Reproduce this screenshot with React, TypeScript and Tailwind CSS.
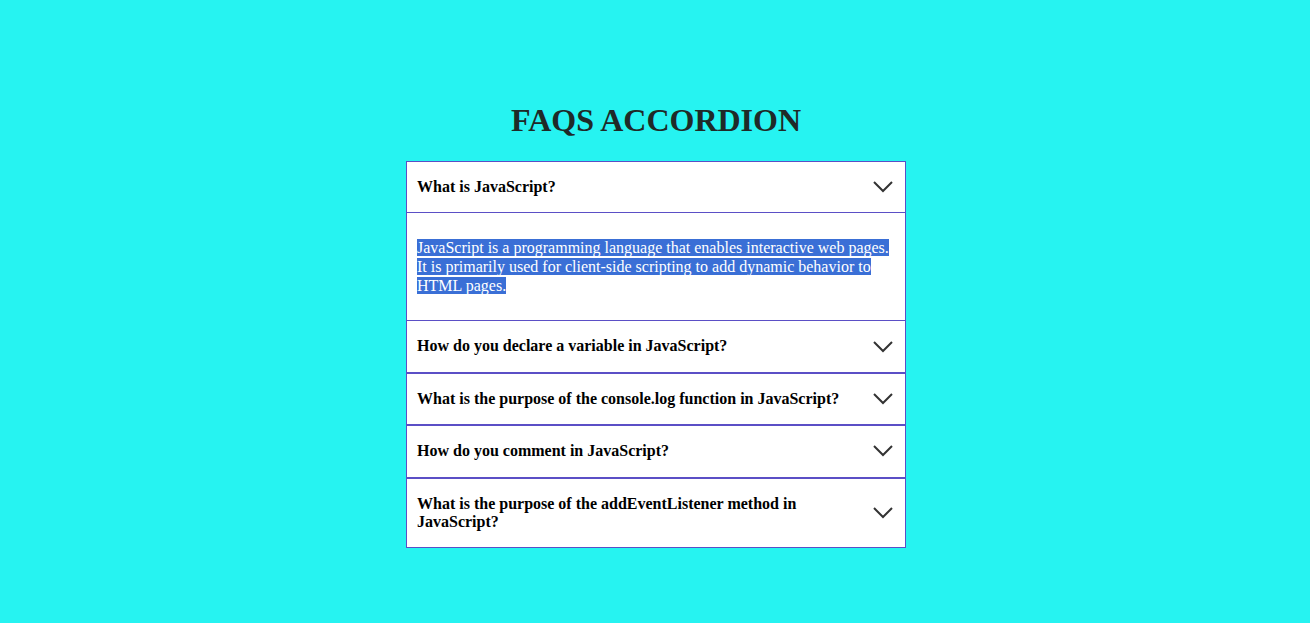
import React from "react";

const faqs = [
  {
    q: "What is JavaScript?",
    a: "JavaScript is a programming language that enables interactive web pages. It is primarily used for client-side scripting to add dynamic behavior to HTML pages.",
    open: true,
  },
  { q: "How do you declare a variable in JavaScript?" },
  { q: "What is the purpose of the console.log function in JavaScript?" },
  { q: "How do you comment in JavaScript?" },
  { q: "What is the purpose of the addEventListener method in JavaScript?" },
];

const Chevron = () => (
  <svg width="20" height="12" viewBox="0 0 20 12" className="shrink-0">
    <polyline points="1,1 10,10 19,1" fill="none" stroke="#333" strokeWidth="2" />
  </svg>
);

const App = () => {
  return (
    <div className="min-h-[623px] bg-[#26f3f1] flex flex-col items-center pt-[100px] pl-[2px] font-['Liberation_Serif',serif]">
      <h1 className="text-[32px] font-bold text-[#1f2a28] leading-[40px] mb-[21px]">FAQS ACCORDION</h1>
      <div className="w-[500px]">
        {faqs.map((f) => (
          <div key={f.q}>
            <div className="flex items-center justify-between border border-[#5b4fc6] bg-white pl-[10px] pr-[12px] py-[16px]">
              <span className="text-[16px] font-bold text-black leading-[18.4px] max-w-[440px]">{f.q}</span>
              <Chevron />
            </div>
            {f.open && (
              <div className="bg-white border-x border-[#5b4fc6] px-[10px] py-[25px] text-[16px] leading-[19px] text-white">
                <span className="bg-[#3a6fd6]">{f.a}</span>
              </div>
            )}
          </div>
        ))}
      </div>
    </div>
  );
};

export default App;
